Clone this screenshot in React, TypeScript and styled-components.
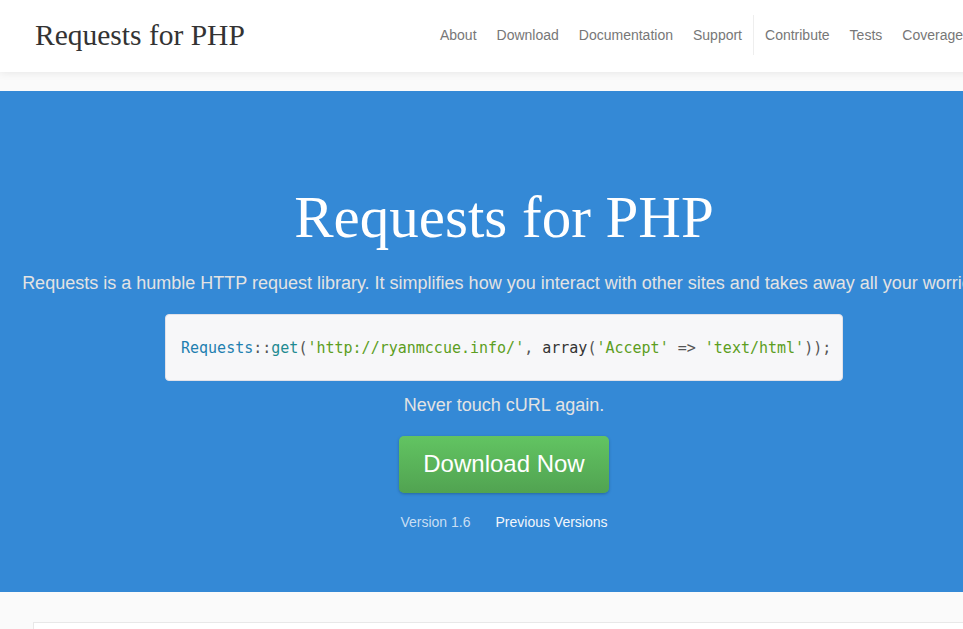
import React from "react";
import styled, { createGlobalStyle } from "styled-components";

const Global = createGlobalStyle`
  html, body { margin: 0; padding: 0; overflow: hidden; }
  body { background: #f9f9f9; font-family: "Liberation Sans", Arial, sans-serif; }
  * { box-sizing: border-box; }
`;

const Page = styled.div`
  width: 1008px;
  min-height: 629px;
  background: #fafafa;
`;

const Header = styled.header`
  position: relative;
  z-index: 2;
  height: 72px;
  background: #fff;
  box-shadow: 0 1px 8px rgba(0, 0, 0, 0.08);
  padding: 15px 35px 0;
  display: flex;
  justify-content: space-between;
  align-items: flex-start;
`;

const Logo = styled.a`
  font-family: "Liberation Serif", "Times New Roman", serif;
  font-size: 29.5px;
  line-height: 40px;
  color: #333;
  text-decoration: none;
`;

const Nav = styled.nav`
  display: flex;
  align-items: stretch;
  height: 40px;
`;

const NavGroup = styled.ul<{ $divided?: boolean }>`
  list-style: none;
  margin: 0 0 0 ${(p) => (p.$divided ? "1px" : "0")};
  padding: 0 0 0 ${(p) => (p.$divided ? "1px" : "0")};
  display: flex;
  border-left: ${(p) => (p.$divided ? "1px solid #eee" : "none")};
`;

const NavLink = styled.a`
  display: block;
  padding: 0 10px;
  font-size: 14px;
  line-height: 40px;
  color: #777;
  text-decoration: none;
`;

const Spacer = styled.div`
  height: 19px;
`;

const Hero = styled.section`
  background: #3489d6;
  padding: 93px 0 60px;
  display: flex;
  flex-direction: column;
  align-items: center;
  text-align: center;
`;

const Title = styled.h1`
  margin: 0;
  font-family: "Liberation Serif", "Times New Roman", serif;
  font-weight: normal;
  font-size: 59px;
  line-height: 66px;
  color: #fff;
`;

const Intro = styled.p`
  align-self: stretch;
  margin: 21px 0 0;
  padding: 0 22px;
  font-size: 18px;
  line-height: 24px;
  color: #e3e3e3;
  white-space: nowrap;
`;

const CodeBox = styled.pre`
  margin: 19px 0 0;
  width: 678px;
  padding: 23px 15px 21px;
  background: #f7f7f9;
  border: 1px solid #e1e1e8;
  border-radius: 4px;
  font-family: "DejaVu Sans Mono", "Liberation Mono", monospace;
  font-size: 15px;
  line-height: 21px;
  color: #444;
  text-align: left;
`;

const Tok = styled.span<{ $kind: "cls" | "fn" | "str" | "kw" | "pun" }>`
  color: ${(p) =>
    ({
      cls: "#1f7fb0",
      fn: "#1f8a91",
      str: "#5c9e22",
      kw: "#333",
      pun: "#555",
    })[p.$kind]};
`;

const Tagline = styled.p`
  margin: 12px 0 0;
  font-size: 18px;
  line-height: 24px;
  color: #e3e3e3;
`;

const DownloadButton = styled.a`
  margin-top: 19px;
  display: inline-block;
  padding: 11px 24px 13px;
  font-size: 24px;
  line-height: 33px;
  color: #fff;
  text-decoration: none;
  border-radius: 5px;
  background: linear-gradient(to bottom, #62c462, #51a351);
  box-shadow: 0 1px 3px rgba(0, 0, 0, 0.25);
`;

const Versions = styled.div`
  margin-top: 19px;
  display: flex;
  gap: 25px;
  font-size: 14px;
  line-height: 20px;
`;

const VersionText = styled.span`
  color: #c8def3;
`;

const VersionLink = styled.a`
  color: #f2f6fb;
  text-decoration: none;
`;

const Content = styled.main`
  padding: 30px 33px 0;
`;

const Card = styled.div`
  background: #fff;
  border: 1px solid #e8e8e8;
  height: 200px;
`;

const primary = ["About", "Download", "Documentation", "Support"];
const secondary = ["Contribute", "Tests", "Coverage"];

export default function App() {
  return (
    <>
      <Global />
      <Page>
        <Header>
          <Logo href="#">Requests for PHP</Logo>
          <Nav>
            <NavGroup>
              {primary.map((n) => (
                <li key={n}>
                  <NavLink href="#">{n}</NavLink>
                </li>
              ))}
            </NavGroup>
            <NavGroup $divided>
              {secondary.map((n) => (
                <li key={n}>
                  <NavLink href="#">{n}</NavLink>
                </li>
              ))}
            </NavGroup>
          </Nav>
        </Header>
        <Spacer />
        <Hero>
          <Title>Requests for PHP</Title>
          <Intro>
            Requests is a humble HTTP request library. It simplifies how you
            interact with other sites and takes away all your worries.
          </Intro>
          <CodeBox>
            <Tok $kind="cls">Requests</Tok>
            <Tok $kind="pun">::</Tok>
            <Tok $kind="fn">get</Tok>
            <Tok $kind="pun">(</Tok>
            <Tok $kind="str">'http://ryanmccue.info/'</Tok>
            <Tok $kind="pun">, </Tok>
            <Tok $kind="kw">array</Tok>
            <Tok $kind="pun">(</Tok>
            <Tok $kind="str">'Accept'</Tok>
            <Tok $kind="pun"> =&gt; </Tok>
            <Tok $kind="str">'text/html'</Tok>
            <Tok $kind="pun">));</Tok>
          </CodeBox>
          <Tagline>Never touch cURL again.</Tagline>
          <DownloadButton href="#">Download Now</DownloadButton>
          <Versions>
            <VersionText>Version 1.6</VersionText>
            <VersionLink href="#">Previous Versions</VersionLink>
          </Versions>
        </Hero>
        <Content>
          <Card />
        </Content>
      </Page>
    </>
  );
}
